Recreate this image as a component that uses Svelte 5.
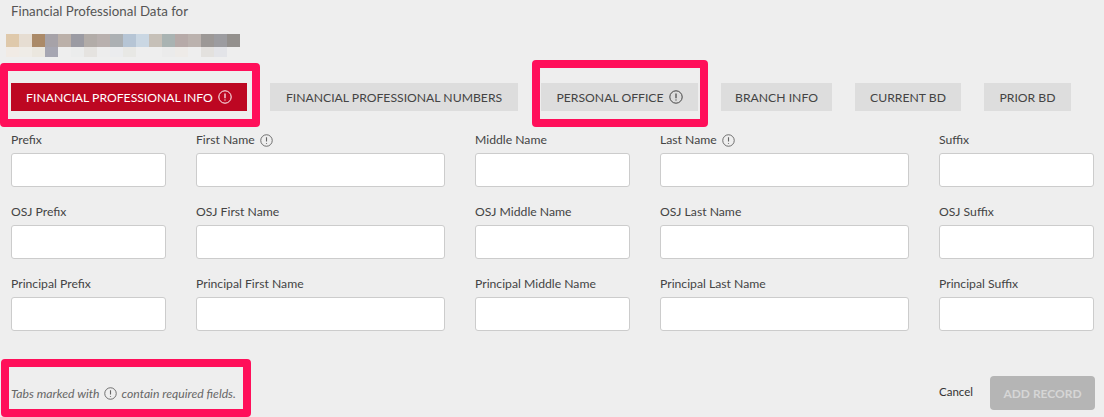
<script>
  const top = ['#dfc9ab','#e6ddd2','#ab8a68','#a6a2a8','#bbb0a9','#9b9ba3','#b2aca8','#b8b0ae','#acb0b3','#b6c5d5','#cad7e3','#c6c0b8','#a9b3b2','#b6aaa8','#bbb2ae','#9c9896','#9c9ca0','#93908d'];
  const bottom = ['#f1ebe5','#efece7','#ebe7df','#a6a6b2','#eeeeee','#ebecec','#e5e3e0','#ededed','#ebecee','#e8e8e5','#eeeeee','#eeeeee','#ebebeb','#eeebe8','#eeeeee','#e3e1de','#e3e4e8','#eeeeee'];
  const tabs = [
    { label: 'FINANCIAL PROFESSIONAL INFO', info: true, active: true, width: 236 },
    { label: 'FINANCIAL PROFESSIONAL NUMBERS', width: 248 },
    { label: 'PERSONAL OFFICE', info: true, width: 157 },
    { label: 'BRANCH INFO', width: 111 },
    { label: 'CURRENT BD', width: 106 },
    { label: 'PRIOR BD', width: 87 }
  ];
  const fields = [
    { label: 'Prefix' }, { label: 'First Name', info: true }, { label: 'Middle Name' }, { label: 'Last Name', info: true }, { label: 'Suffix' },
    { label: 'OSJ Prefix' }, { label: 'OSJ First Name' }, { label: 'OSJ Middle Name' }, { label: 'OSJ Last Name' }, { label: 'OSJ Suffix' },
    { label: 'Principal Prefix' }, { label: 'Principal First Name' }, { label: 'Principal Middle Name' }, { label: 'Principal Last Name' }, { label: 'Principal Suffix' }
  ];
</script>

{#snippet infoIcon()}
  <svg class="info" viewBox="0 0 14 14" aria-hidden="true">
    <circle cx="7" cy="7" r="6.2" fill="none" stroke="currentColor" stroke-width="1" />
    <path d="M7 3.4V8.2M7 9.6v1" fill="none" stroke="currentColor" stroke-width="1.2" />
  </svg>
{/snippet}

<div class="page">
  <h1>Financial Professional Data for</h1>

  <div class="redacted" aria-hidden="true">
    {#each top as c}<i style="background:{c}"></i>{/each}
    {#each bottom as c}<i class="low" style="background:{c}"></i>{/each}
  </div>

  <nav class="tabs">
    {#each tabs as t}
      <button class="tab" class:active={t.active} type="button" style="width:{t.width}px">
        {t.label}
        {#if t.info}{@render infoIcon()}{/if}
      </button>
    {/each}
  </nav>

  <div class="grid">
    {#each fields as f}
      <label class="field">
        <span class="lab">{f.label}{#if f.info}{@render infoIcon()}{/if}</span>
        <input type="text" />
      </label>
    {/each}
  </div>

  <footer>
    <p class="note">Tabs marked with {@render infoIcon()} contain required fields.</p>
    <div class="actions">
      <button class="cancel" type="button">Cancel</button>
      <button class="add" type="button" disabled>ADD RECORD</button>
    </div>
  </footer>

  <div class="mark m1"></div>
  <div class="mark m2"></div>
  <div class="mark m3"></div>
</div>

<style>
  :global(body) { margin: 0; background: #eee; }
  .page {
    position: relative;
    width: 1104px;
    height: 417px;
    overflow: hidden;
    box-sizing: border-box;
    padding: 0 10px 0 11px;
    background: #eee;
    color: #444;
    font-family: Lato, "Noto Sans", sans-serif;
    font-size: 12px;
  }
  h1 {
    margin: 0;
    padding-top: 3px;
    height: 34px;
    box-sizing: border-box;
    font-size: 13.3px;
    font-weight: 400;
    line-height: 17px;
    color: #555;
  }
  .redacted {
    margin-left: -5px;
    display: grid;
    grid-template-columns: repeat(18, 13px);
    grid-template-rows: 13px 10px;
    align-content: start;
    height: 49px;
  }
  .redacted i { display: block; }
  .tabs {
    display: flex;
    gap: 23px;
    height: 28px;
  }
  .tab {
    display: flex;
    align-items: center;
    justify-content: center;
    gap: 5px;
    height: 28px;
    padding: 0;
    border: 0;
    background: #ddd;
    color: #444;
    font: inherit;
    font-size: 12.2px;
    white-space: nowrap;
  }
  .tab.active { background: #bd0722; color: #fff; }
  .info { width: 14px; height: 14px; flex: none; color: inherit; }
  .grid {
    display: grid;
    grid-template-columns: 155px 249px 155px 249px 155px;
    column-gap: 30px;
    row-gap: 16px;
    margin-top: 20px;
  }
  .field { display: flex; flex-direction: column; gap: 4px; }
  .lab {
    display: flex;
    align-items: center;
    gap: 5px;
    height: 18px;
    font-size: 12.2px;
    line-height: 18px;
    color: #444;
  }
  .lab .info { width: 13px; height: 13px; color: #666; }
  input {
    box-sizing: border-box;
    width: 100%;
    height: 34px;
    border: 1px solid #ccc;
    border-radius: 3px;
    background: #fff;
  }
  footer {
    position: absolute;
    left: 11px;
    right: 9px;
    top: 376px;
    height: 34px;
    display: flex;
    justify-content: space-between;
    align-items: center;
  }
  .note {
    margin: 0;
    display: flex;
    align-items: center;
    gap: 4px;
    font-size: 12.2px;
    font-style: italic;
    color: #666;
  }
  .note .info { width: 13px; height: 13px; margin-right: 1px; }
  .actions { display: flex; align-items: center; gap: 17px; }
  .cancel {
    border: 0;
    background: none;
    padding: 0;
    font: inherit;
    font-size: 11.5px;
    color: #333;
    position: relative;
    top: -2px;
  }
  .add {
    width: 105px;
    height: 34px;
    border: 0;
    border-radius: 4px;
    background: #b5b5b5;
    color: #d6d6d6;
    font: inherit;
    font-size: 12px;
    font-weight: 700;
  }
  .mark {
    position: absolute;
    box-sizing: border-box;
    border: 8px solid #ff0f5a;
    border-radius: 4px;
    pointer-events: none;
  }
  .m1 { left: 0; top: 63px; width: 260px; height: 64px; }
  .m2 { left: 532px; top: 60px; width: 176px; height: 67px; }
  .m3 { left: 1px; top: 359px; width: 250px; height: 58px; }
</style>
